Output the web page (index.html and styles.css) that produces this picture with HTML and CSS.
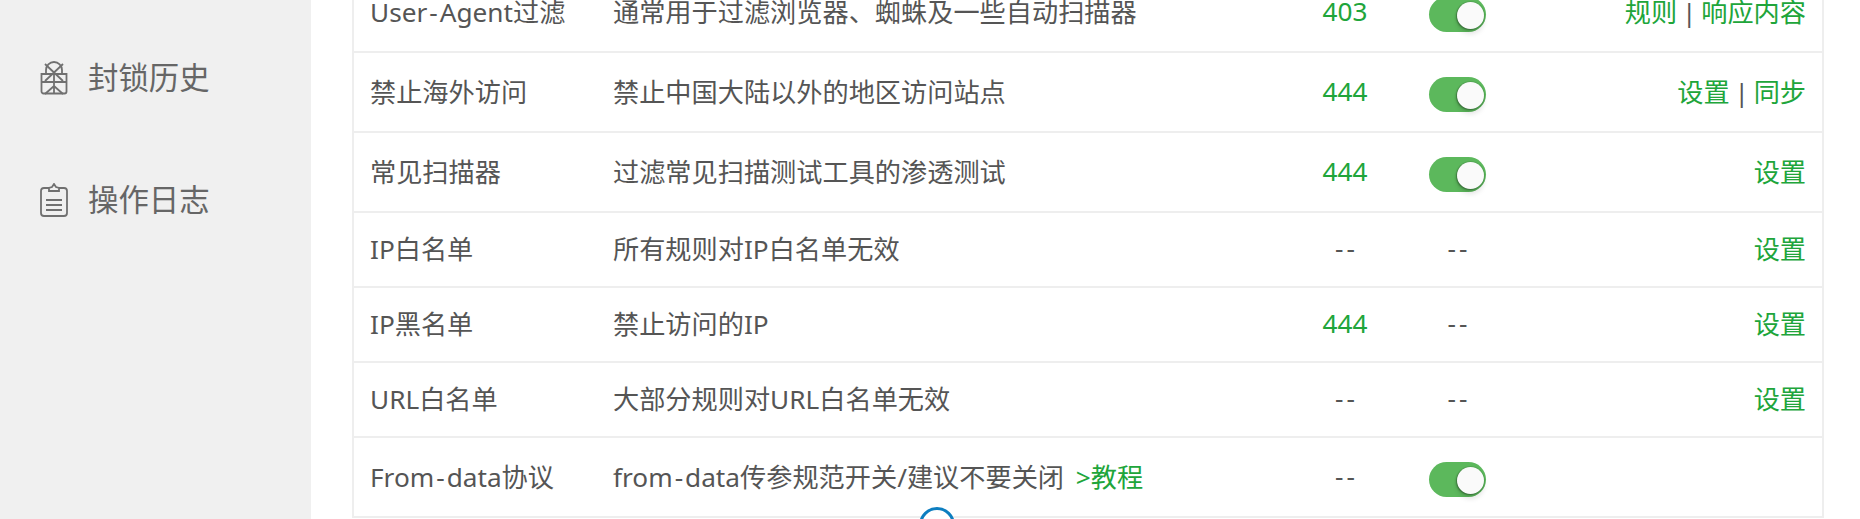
FILE: index.html
```html
<!DOCTYPE html>
<html lang="zh-CN">
<head>
    <meta charset="UTF-8">
    <title>防火墙</title>
    <link rel="stylesheet" href="styles.css">
</head>
<body>
    <div class="page">
        <!-- Sidebar -->
        <aside class="sidebar">
            <a class="side-item" href="#">
                <svg class="side-icon" viewBox="0 0 28 34" aria-hidden="true">
                    <path d="M6 14V9a8 8 0 0 1 16 0v5"/>
                    <path d="M1.5 13h25v17.5a2 2 0 0 1-2 2h-21a2 2 0 0 1-2-2z"/>
                    <path d="M5 3l18 17M23 3L5 20M1.5 21h25M14 13v20M5 33l9-8 9 8"/>
                </svg>
                封锁历史
            </a>
            <a class="side-item" href="#">
                <svg class="side-icon" viewBox="0 0 28 34" aria-hidden="true">
                    <path d="M9 5H4a3 3 0 0 0-3 3v22a3 3 0 0 0 3 3h20a3 3 0 0 0 3-3V8a3 3 0 0 0-3-3h-5"/>
                    <path d="M9 8V5l3-1 2-3 2 3 3 1v3z"/>
                    <path d="M6 17h16M6 22h16M6 27h16"/>
                </svg>
                操作日志
            </a>
        </aside>

        <!-- Rule table -->
        <main class="content">
            <table class="rules">
                <colgroup>
                    <col class="col-name">
                    <col class="col-desc">
                    <col class="col-code">
                    <col class="col-state">
                    <col>
                </colgroup>
                <tbody>
                    <tr class="tall">
                        <td>User<span class="hyphen">-</span>Agent过滤</td>
                        <td>通常用于过滤浏览器、蜘蛛及一些自动扫描器</td>
                        <td class="code on">403</td>
                        <td class="state"><span class="switch"></span></td>
                        <td class="actions"><a href="#">规则</a> | <a href="#">响应内容</a></td>
                    </tr>
                    <tr class="tall">
                        <td>禁止海外访问</td>
                        <td>禁止中国大陆以外的地区访问站点</td>
                        <td class="code on">444</td>
                        <td class="state"><span class="switch"></span></td>
                        <td class="actions"><a href="#">设置</a> | <a href="#">同步</a></td>
                    </tr>
                    <tr class="tall">
                        <td>常见扫描器</td>
                        <td>过滤常见扫描测试工具的渗透测试</td>
                        <td class="code on">444</td>
                        <td class="state"><span class="switch"></span></td>
                        <td class="actions"><a href="#">设置</a></td>
                    </tr>
                    <tr>
                        <td>IP白名单</td>
                        <td>所有规则对IP白名单无效</td>
                        <td class="code dash">--</td>
                        <td class="state dash">--</td>
                        <td class="actions"><a href="#">设置</a></td>
                    </tr>
                    <tr>
                        <td>IP黑名单</td>
                        <td>禁止访问的IP</td>
                        <td class="code on">444</td>
                        <td class="state dash">--</td>
                        <td class="actions"><a href="#">设置</a></td>
                    </tr>
                    <tr>
                        <td>URL白名单</td>
                        <td>大部分规则对URL白名单无效</td>
                        <td class="code dash">--</td>
                        <td class="state dash">--</td>
                        <td class="actions"><a href="#">设置</a></td>
                    </tr>
                    <tr class="tall">
                        <td>From<span class="hyphen">-</span>data协议</td>
                        <td>from<span class="hyphen">-</span>data传参规范开关/建议不要关闭 <a class="guide" href="#">&gt;教程</a></td>
                        <td class="code dash">--</td>
                        <td class="state"><span class="switch"></span></td>
                        <td class="actions"></td>
                    </tr>
                </tbody>
            </table>
        </main>
    </div>

    <!-- Loading ring peeking in from the bottom edge -->
    <div class="ring"></div>
</body>
</html>
```

FILE: styles.css
```css
html, body {
    height: 100%;
}

body {
    margin: 0;
    overflow: hidden;
    background: white;
    color: #555;
    font-family: "Noto Sans", "Noto Sans CJK SC", sans-serif;
}

a {
    color: #20a53a;
    text-decoration: none;
}

.page {
    display: flex;
    height: 100%;
}

/* Sidebar */
.sidebar {
    width: 311px;
    flex-shrink: 0;
    padding-top: 15px;
    background: #f0f0f0;
}

.side-item {
    display: flex;
    align-items: center;
    gap: 20px;
    height: 122px;
    padding-left: 40px;
    color: #666;
    font-size: 30.4px;
}

.side-icon {
    width: 28px;
    height: 34px;
    margin-top: 4px;
    fill: none;
    stroke: #707070;
    stroke-width: 1.8;
}

/* Rule table */
.content {
    flex: 1;
    padding: 0 36px 0 41px;
}

.rules {
    width: 100%;
    margin-top: -27px;
    border-collapse: separate;
    border-spacing: 0;
    border-left: 2px solid #eee;
    border-right: 2px solid #eee;
    table-layout: fixed;
    font-size: 26.2px;
}

.rules td {
    height: 75px;
    padding: 0 0 4px;
    border-bottom: 2px solid #eee;
    box-sizing: border-box;
    white-space: nowrap;
}

.rules tr.tall td {
    height: 80px;
    padding-bottom: 2px;
}

.rules td:first-child {
    padding-left: 16px;
}

.col-name {
    width: 259px;
}

.col-desc {
    width: 667px;
}

.col-code {
    width: 130px;
}

.col-state {
    width: 95px;
}

.code, .state {
    text-align: center;
}

.code.on {
    color: #20a53a;
}

.rules .dash {
    padding-left: 3px;
    letter-spacing: 3px;
}

.hyphen {
    margin: 0 2px;
}

.guide {
    margin-left: 5px;
}

.rules .actions {
    padding-right: 16px;
    text-align: right;
    word-spacing: -2px;
}

/* Switch */
.switch {
    position: relative;
    display: block;
    width: 57px;
    height: 35px;
    margin: 6px auto 0;
    border-radius: 18px;
    background: #5cb85c;
}

.switch::after {
    content: "";
    position: absolute;
    top: 5px;
    right: 2px;
    width: 27px;
    height: 27px;
    border-radius: 50%;
    background: #fafafa;
    box-shadow: 0 0 0 1px rgba(0, 0, 0, 0.08), -1px 1px 2px rgba(0, 0, 0, 0.3), 0 5px 5px rgba(0, 0, 0, 0.1);
}

/* Ring */
.ring {
    position: absolute;
    left: 919px;
    top: 507px;
    width: 36px;
    height: 36px;
    border: 3px solid #0d7ec0;
    border-radius: 50%;
    background: white;
    box-sizing: border-box;
}
```
